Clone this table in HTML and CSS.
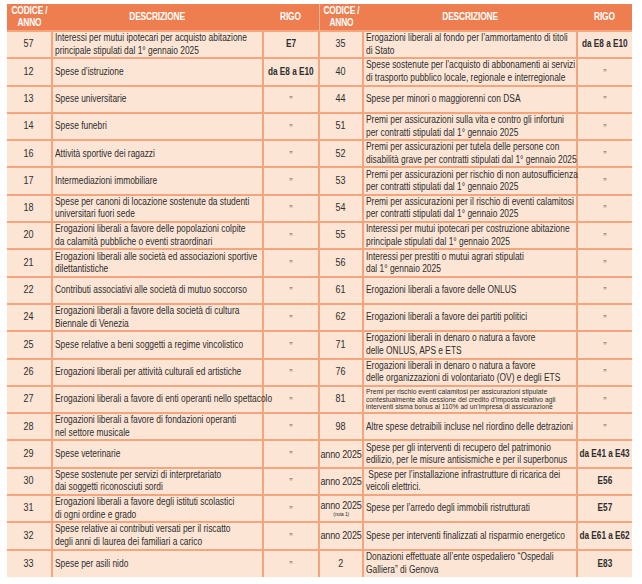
FILE: index.html
```html
<!DOCTYPE html>
<html lang="it">
<head>
<meta charset="utf-8">
<title>Codici spese</title>
<link rel="stylesheet" href="styles.css">
</head>
<body>
<div class="page">
<table class="grid">
<colgroup>
<col class="c-code"><col class="c-desc"><col class="c-rigo">
<col class="c-code2"><col class="c-desc2"><col class="c-rigo2">
</colgroup>
<thead>
<tr>
<th><span>CODICE /<br>ANNO</span></th><th><span>DESCRIZIONE</span></th><th class="sep"><span>RIGO</span></th>
<th><span>CODICE /<br>ANNO</span></th><th><span>DESCRIZIONE</span></th><th><span>RIGO</span></th>
</tr>
</thead>
<tbody>
<tr>
<td class="code"><span>57</span></td><td class="desc"><span>Interessi per mutui ipotecari per acquisto abitazione<br>principale stipulati dal 1° gennaio 2025</span></td><td class="rigo"><span>E7</span></td>
<td class="code"><span>35</span></td><td class="desc"><span>Erogazioni liberali al fondo per l’ammortamento di titoli<br>di Stato</span></td><td class="rigo"><span>da E8 a E10</span></td>
</tr>
<tr>
<td class="code"><span>12</span></td><td class="desc"><span>Spese d’istruzione</span></td><td class="rigo"><span>da E8 a E10</span></td>
<td class="code"><span>40</span></td><td class="desc"><span>Spese sostenute per l’acquisto di abbonamenti ai servizi<br>di trasporto pubblico locale, regionale e interregionale</span></td><td class="rigo ditto"><span>”</span></td>
</tr>
<tr>
<td class="code"><span>13</span></td><td class="desc"><span>Spese universitarie</span></td><td class="rigo ditto"><span>”</span></td>
<td class="code"><span>44</span></td><td class="desc"><span>Spese per minori o maggiorenni con DSA</span></td><td class="rigo ditto"><span>”</span></td>
</tr>
<tr>
<td class="code"><span>14</span></td><td class="desc"><span>Spese funebri</span></td><td class="rigo ditto"><span>”</span></td>
<td class="code"><span>51</span></td><td class="desc"><span>Premi per assicurazioni sulla vita e contro gli infortuni<br>per contratti stipulati dal 1° gennaio 2025</span></td><td class="rigo ditto"><span>”</span></td>
</tr>
<tr>
<td class="code"><span>16</span></td><td class="desc"><span>Attività sportive dei ragazzi</span></td><td class="rigo ditto"><span>”</span></td>
<td class="code"><span>52</span></td><td class="desc"><span>Premi per assicurazioni per tutela delle persone con<br>disabilità grave per contratti stipulati dal 1° gennaio 2025</span></td><td class="rigo ditto"><span>”</span></td>
</tr>
<tr>
<td class="code"><span>17</span></td><td class="desc"><span>Intermediazioni immobiliare</span></td><td class="rigo ditto"><span>”</span></td>
<td class="code"><span>53</span></td><td class="desc"><span>Premi per assicurazioni per rischio di non autosufficienza<br>per contratti stipulati dal 1° gennaio 2025</span></td><td class="rigo ditto"><span>”</span></td>
</tr>
<tr>
<td class="code"><span>18</span></td><td class="desc"><span>Spese per canoni di locazione sostenute da studenti<br>universitari fuori sede</span></td><td class="rigo ditto"><span>”</span></td>
<td class="code"><span>54</span></td><td class="desc"><span>Premi per assicurazioni per il rischio di eventi calamitosi<br>per contratti stipulati dal 1° gennaio 2025</span></td><td class="rigo ditto"><span>”</span></td>
</tr>
<tr>
<td class="code"><span>20</span></td><td class="desc"><span>Erogazioni liberali a favore delle popolazioni colpite<br>da calamità pubbliche o eventi straordinari</span></td><td class="rigo ditto"><span>”</span></td>
<td class="code"><span>55</span></td><td class="desc"><span>Interessi per mutui ipotecari per costruzione abitazione<br>principale stipulati dal 1° gennaio 2025</span></td><td class="rigo ditto"><span>”</span></td>
</tr>
<tr>
<td class="code"><span>21</span></td><td class="desc"><span>Erogazioni liberali alle società ed associazioni sportive<br>dilettantistiche</span></td><td class="rigo ditto"><span>”</span></td>
<td class="code"><span>56</span></td><td class="desc"><span>Interessi per prestiti o mutui agrari stipulati<br>dal 1° gennaio 2025</span></td><td class="rigo ditto"><span>”</span></td>
</tr>
<tr>
<td class="code"><span>22</span></td><td class="desc"><span>Contributi associativi alle società di mutuo soccorso</span></td><td class="rigo ditto"><span>”</span></td>
<td class="code"><span>61</span></td><td class="desc"><span>Erogazioni liberali a favore delle ONLUS</span></td><td class="rigo ditto"><span>”</span></td>
</tr>
<tr>
<td class="code"><span>24</span></td><td class="desc"><span>Erogazioni liberali a favore della società di cultura<br>Biennale di Venezia</span></td><td class="rigo ditto"><span>”</span></td>
<td class="code"><span>62</span></td><td class="desc"><span>Erogazioni liberali a favore dei partiti politici</span></td><td class="rigo ditto"><span>”</span></td>
</tr>
<tr>
<td class="code"><span>25</span></td><td class="desc"><span>Spese relative a beni soggetti a regime vincolistico</span></td><td class="rigo ditto"><span>”</span></td>
<td class="code"><span>71</span></td><td class="desc"><span>Erogazioni liberali in denaro o natura a favore<br>delle ONLUS, APS e ETS</span></td><td class="rigo ditto"><span>”</span></td>
</tr>
<tr>
<td class="code"><span>26</span></td><td class="desc"><span>Erogazioni liberali per attività culturali ed artistiche</span></td><td class="rigo ditto"><span>”</span></td>
<td class="code"><span>76</span></td><td class="desc"><span>Erogazioni liberali in denaro o natura a favore<br>delle organizzazioni di volontariato (OV) e degli ETS</span></td><td class="rigo ditto"><span>”</span></td>
</tr>
<tr>
<td class="code"><span>27</span></td><td class="desc"><span>Erogazioni liberali a favore di enti operanti nello spettacolo</span></td><td class="rigo ditto"><span>”</span></td>
<td class="code"><span>81</span></td><td class="desc small"><span>Premi per rischio eventi calamitosi per assicurazioni stipulate<br>contestualmente alla cessione del credito d’imposta relativo agli<br>interventi sisma bonus al 110% ad un’impresa di assicurazione</span></td><td class="rigo ditto"><span>”</span></td>
</tr>
<tr>
<td class="code"><span>28</span></td><td class="desc"><span>Erogazioni liberali a favore di fondazioni operanti<br>nel settore musicale</span></td><td class="rigo ditto"><span>”</span></td>
<td class="code"><span>98</span></td><td class="desc"><span>Altre spese detraibili incluse nel riordino delle detrazioni</span></td><td class="rigo ditto"><span>”</span></td>
</tr>
<tr>
<td class="code"><span>29</span></td><td class="desc"><span>Spese veterinarie</span></td><td class="rigo ditto"><span>”</span></td>
<td class="code year"><span>anno 2025</span></td><td class="desc"><span>Spese per gli interventi di recupero del patrimonio<br>edilizio, per le misure antisismiche e per il superbonus</span></td><td class="rigo"><span>da E41 a E43</span></td>
</tr>
<tr>
<td class="code"><span>30</span></td><td class="desc"><span>Spese sostenute per servizi di interpretariato<br>dai soggetti riconosciuti sordi</span></td><td class="rigo ditto"><span>”</span></td>
<td class="code year"><span>anno 2025</span></td><td class="desc"><span>&nbsp;Spese per l’installazione infrastrutture di ricarica dei<br>veicoli elettrici.</span></td><td class="rigo"><span>E56</span></td>
</tr>
<tr>
<td class="code"><span>31</span></td><td class="desc"><span>Erogazioni liberali a favore degli istituti scolastici<br>di ogni ordine e grado</span></td><td class="rigo ditto"><span>”</span></td>
<td class="code year"><span>anno 2025<br><small class="note">(nota 1)</small></span></td><td class="desc"><span>Spese per l’arredo degli immobili ristrutturati</span></td><td class="rigo"><span>E57</span></td>
</tr>
<tr>
<td class="code"><span>32</span></td><td class="desc"><span>Spese relative ai contributi versati per il riscatto<br>degli anni di laurea dei familiari a carico</span></td><td class="rigo ditto"><span>”</span></td>
<td class="code year"><span>anno 2025</span></td><td class="desc"><span>Spese per interventi finalizzati al risparmio energetico</span></td><td class="rigo"><span>da E61 a E62</span></td>
</tr>
<tr class="last">
<td class="code"><span>33</span></td><td class="desc"><span>Spese per asili nido</span></td><td class="rigo ditto"><span>”</span></td>
<td class="code"><span>2</span></td><td class="desc"><span>Donazioni effettuate all’ente ospedaliero “Ospedali<br>Galliera” di Genova</span></td><td class="rigo"><span>E83</span></td>
</tr>
</tbody>
</table>
</div>
</body>
</html>
```

FILE: styles.css
```css
html, body {
  margin: 0;
  padding: 0;
  background: #ffffff;
}

.page {
  padding: 4px 0 0 7px;
  font-family: "Liberation Sans", Arial, sans-serif;
}

.grid {
  border-collapse: collapse;
  table-layout: fixed;
  width: 625px;
}

.c-code { width: 45px; }
.c-desc { width: 211px; }
.c-rigo { width: 56px; }
.c-code2 { width: 44px; }
.c-desc2 { width: 214px; }
.c-rigo2 { width: 55px; }

.grid th > span,
.grid td > span {
  display: inline-block;
  white-space: nowrap;
  transform: scaleX(0.84);
  transform-origin: center center;
}

.grid thead tr {
  height: 27px;
}

.grid th {
  background: #ee7e4f;
  color: #ffffff;
  font-weight: bold;
  font-size: 10px;
  line-height: 12px;
  padding: 0;
  text-align: center;
  vertical-align: middle;
  border: none;
  letter-spacing: -0.2px;
}

.grid th.sep {
  border-right: 1px solid #f6b594;
}

.grid tbody tr {
  height: 27.3px;
}

.grid td {
  background: #fce5d5;
  border: 2px solid #f4a57d;
  padding: 0 2px;
  vertical-align: middle;
  color: #2e2e2e;
  font-size: 10px;
  line-height: 12.5px;
  overflow: visible;
}

.grid tr.last td {
  border-bottom: none;
}

.grid td:first-child {
  border-left: none;
}

.grid td:last-child {
  border-right: none;
}

.code {
  text-align: center;
  font-size: 10.5px;
}

.grid td.code > span {
  transform: scaleX(0.9);
}

.code.year {
  font-size: 11px;
  line-height: 11px;
  padding: 0;
  letter-spacing: -0.2px;
}

.grid td.code.year > span {
  transform: scaleX(0.82);
  margin: 0 -8px;
}

.note {
  display: block;
  font-size: 6px;
  line-height: 7px;
}

.desc {
  text-align: left;
  padding-left: 3px;
}

.grid td.desc > span {
  transform-origin: left center;
}

.desc.small {
  font-size: 8px;
  line-height: 7.6px;
}

.grid td.desc.small > span {
  transform: scaleX(0.84);
}

.rigo {
  text-align: center;
  font-weight: bold;
  font-size: 9px;
}

.grid td.rigo > span {
  transform: scaleX(0.82);
  margin: 0 -10px;
}

.rigo.ditto {
  font-weight: normal;
  color: #7d6f66;
  font-size: 10px;
  line-height: 10px;
}

.grid td.rigo.ditto > span {
  padding-top: 4px;
  transform: none;
  margin: 0;
}
```
